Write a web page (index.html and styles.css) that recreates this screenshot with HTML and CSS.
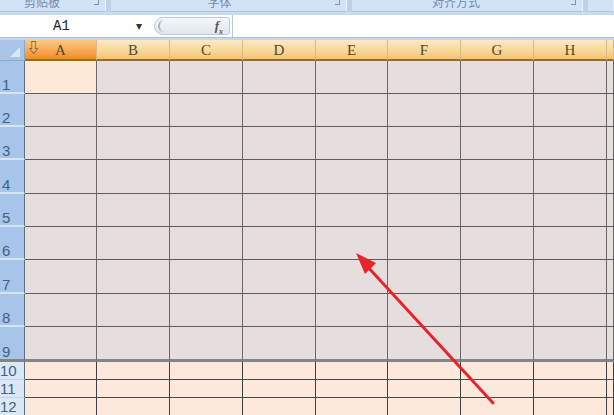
FILE: index.html
```html
<!DOCTYPE html>
<html lang="zh-CN">
<head>
  <meta charset="UTF-8" />
  <title>Excel 工作表</title>
  <link rel="stylesheet" href="styles.css">
</head>
<body>
  <div class="ribbon">
    <div class="group g1"><span>剪贴板</span><i class="launch"></i></div>
    <div class="group g2"><span>字体</span><i class="launch"></i></div>
    <div class="group g3"><span>对齐方式</span><i class="launch"></i></div>
    <div class="group g4"></div>
  </div>

  <div class="fbar">
    <div class="namebox">A1</div>
    <div class="drop">&#9662;</div>
    <div class="fxpill"><span class="knob"></span><span class="fx">f<sub>x</sub></span></div>
    <div class="finput"></div>
  </div>

  <div class="sheet" id="sheet"></div>

  <svg class="arrow" width="614" height="415" viewBox="0 0 614 415">
    <line x1="493" y1="403" x2="366" y2="265" stroke="#e8232c" stroke-width="3" stroke-linecap="round" />
    <polygon points="356,253 376,263 365,274" fill="#e8232c" />
  </svg>

  <script>
    const sheet = document.getElementById('sheet');
    const cols = ['A', 'B', 'C', 'D', 'E', 'F', 'G', 'H', ''];

    // cabeçalho das colunas
    let html = '<div class="corner"><i></i></div>';
    cols.forEach((c, i) => {
      html += `<div class="colhead${i === 0 ? ' sel' : ''}">${i === 0 ? '<span class="filt">&#8681;</span>' : ''}${c}</div>`;
    });

    for (let r = 1; r <= 12; r++) {
      const low = r > 9 ? ' low' : '';
      const last = r === 9 ? ' last' : '';
      html += `<div class="rowhead${low}${last}">${r}</div>`;
      cols.forEach((c, i) => {
        const active = r === 1 && i === 0 ? ' active' : '';
        html += `<div class="cell${low}${last}${active}"></div>`;
      });
    }
    sheet.innerHTML = html;
  </script>
</body>
</html>
```

FILE: styles.css
```css
body {
  margin: 0;
  width: 614px;
  height: 415px;
  overflow: hidden;
  background: #c4d8ee;
  font-family: 'Liberation Sans', sans-serif;
  position: relative;
}

.ribbon {
  display: flex;
  height: 12px;
  gap: 5px;
  background: #bcd2ea;
  border-bottom: 3px solid #c9dbef;
  overflow: hidden;
}

.group {
  position: relative;
  background: #d3e2f4;
  border-right: 1px solid #eaf2fb;
  border-bottom: 1px solid #aac3e2;
  text-align: center;
  font-size: 12px;
  color: #6f8bb4;
  font-family: 'Noto Sans CJK SC', sans-serif;
}

.group span {
  display: block;
  line-height: 12px;
  margin-top: -4px;
}

.g1 { width: 105px; }
.g1 span { text-align: left; padding-left: 24px; }
.g2 { width: 235px; }
.g2 span { padding-right: 18px; }
.g3 { width: 230px; }
.g3 span { padding-right: 22px; }
.g4 { flex: 1; }

.launch {
  position: absolute;
  right: 6px;
  top: 0;
  width: 4px;
  height: 4px;
  border-right: 1px solid #7d93b5;
  border-bottom: 1px solid #7d93b5;
}

.fbar {
  display: flex;
  align-items: center;
  height: 22px;
  background: #fff;
  border-bottom: 1px solid #a8c0de;
  margin-bottom: 2px;
}

.namebox {
  width: 126px;
  padding-left: 53px;
  box-sizing: border-box;
  font-family: 'Liberation Mono', monospace;
  font-size: 14px;
  color: #222;
}

.drop {
  width: 20px;
  font-size: 12px;
  color: #333;
  padding-left: 10px;
}

.fxpill {
  position: relative;
  width: 76px;
  height: 18px;
  margin-left: -2px;
  border: 1px solid #b9c9dc;
  border-radius: 10px 3px 3px 10px;
  background: linear-gradient(#f4f7fb, #dfe6ef);
  box-sizing: border-box;
}

.knob {
  position: absolute;
  left: 3px;
  top: 2px;
  width: 10px;
  height: 12px;
  border-radius: 50%;
  border-left: 2px solid #aab6c6;
}

.fx {
  position: absolute;
  right: 6px;
  top: 0;
  font-family: 'Liberation Serif', serif;
  font-style: italic;
  font-weight: bold;
  font-size: 13px;
  color: #555;
}

.fx sub {
  font-size: 8px;
}

.finput {
  flex: 1;
  height: 22px;
  border-left: 1px solid #b9c9dc;
  margin-left: 2px;
}

.sheet {
  display: grid;
  grid-template-columns: 25px 72px 73px 73px 73px 72px 73px 73px 73px 1fr;
  grid-template-rows: 21px 33px 33px 33px 34px 33px 33px 34px 33px 35px 18px 18px 18px;
}

.corner {
  position: relative;
  background: #a8c5e8;
  border-right: 1px solid #8aa8cc;
  border-bottom: 1px solid #8aa8cc;
}

.corner i {
  position: absolute;
  right: 4px;
  bottom: 3px;
  width: 0;
  height: 0;
  border-left: 10px solid transparent;
  border-bottom: 10px solid #dbe7f5;
}

.colhead {
  position: relative;
  background: linear-gradient(#fbe9c6, #f8d89a 55%, #f4c470);
  border-right: 1px solid #d9b987;
  border-bottom: 2px solid #9a6a2a;
  text-align: center;
  font-family: 'Liberation Serif', serif;
  font-size: 15px;
  line-height: 21px;
  color: #55472c;
}

.colhead.sel {
  background: linear-gradient(#fbc784, #f8a952 55%, #f08a2a);
}

.filt {
  position: absolute;
  left: 2px;
  top: -3px;
  font-size: 13px;
  color: #333;
}

.rowhead {
  background: #a7c5ea;
  border-bottom: 2px solid #d6e5f6;
  border-right: 1px solid #5e6f84;
  font-size: 15px;
  color: #40618a;
  display: flex;
  align-items: flex-end;
  padding-left: 2px;
  line-height: 14px;
}

.rowhead.low {
  background: #dbe7f4;
  border-bottom: 1px solid #c4d5ea;
  line-height: 17px;
  align-items: center;
  padding-left: 0;
}

.cell {
  background: #e6dddd;
  border-right: 1px solid #6a6a6a;
  border-bottom: 1px solid #5c5c5c;
}

.cell.active {
  background: #fde9d8;
}

.cell.last,
.rowhead.last {
  border-bottom: 3px solid #858585;
}

.cell.low {
  background: #fce9db;
  border-right: 1px solid #3f3f3f;
  border-bottom: 1px solid #4a4a4a;
}

.arrow {
  position: absolute;
  left: 0;
  top: 0;
  pointer-events: none;
}
```
